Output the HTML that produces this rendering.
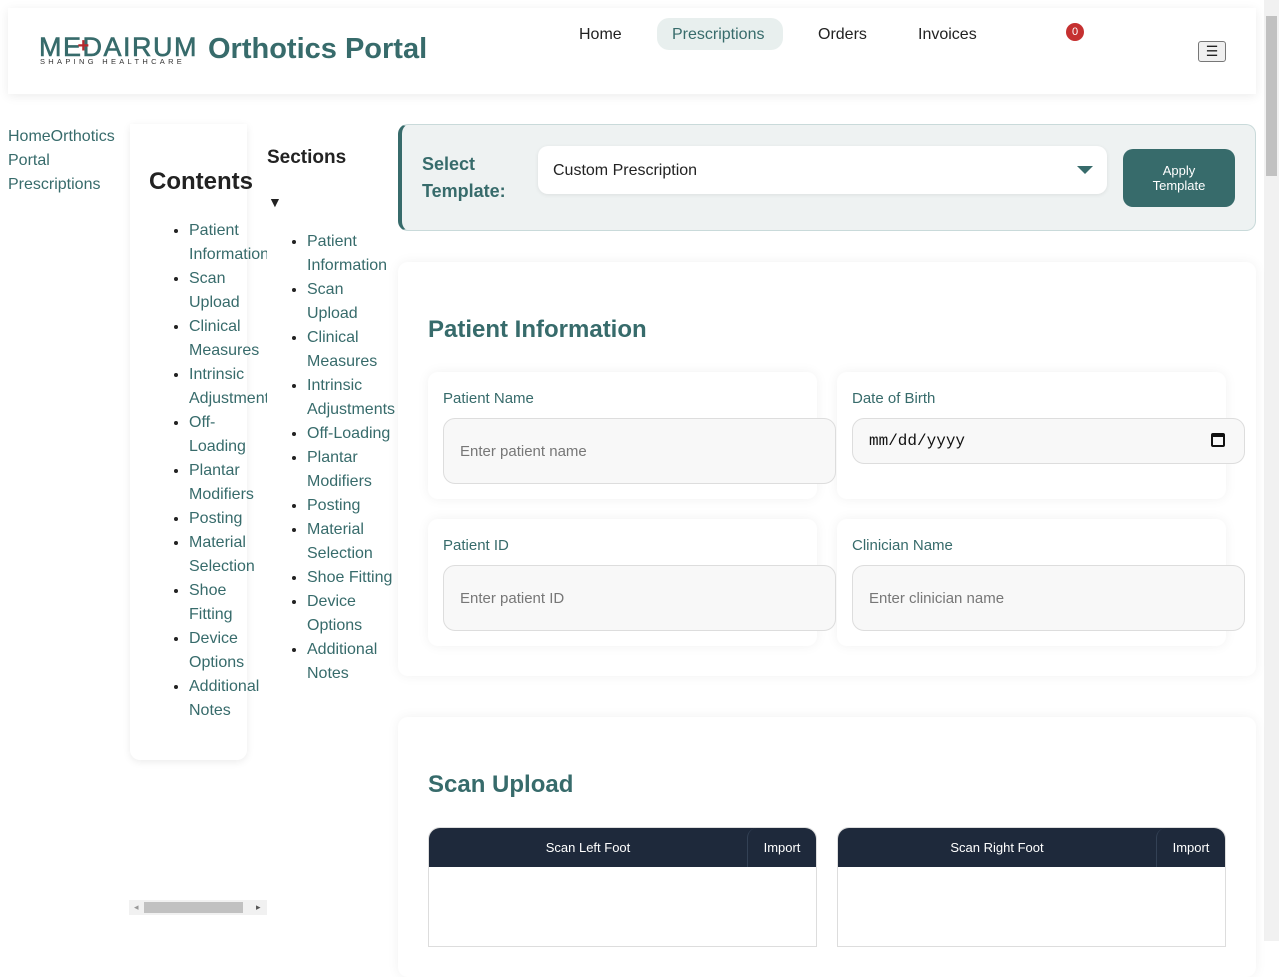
<!DOCTYPE html>
<html><head><meta charset="utf-8"><style>
*{box-sizing:border-box;margin:0;padding:0}
body{width:1279px;height:941px;overflow:hidden;background:#fff;font-family:"Liberation Sans",sans-serif;position:relative;color:#222}
.a{position:absolute}
.teal{color:#376b6b}
header{position:absolute;left:8px;top:8px;width:1248px;height:86px;background:#fff;box-shadow:0 2px 10px rgba(0,0,0,.08)}
.nav{position:absolute;top:18px;font-size:16px;color:#222}
ul{list-style:disc;position:absolute}
li{font-size:16px;line-height:24px;color:#376b6b}
li::marker{color:#222}
.card{position:absolute;background:#fff;border-radius:10px;box-shadow:0 0 12px rgba(0,0,0,.06)}
.lbl{position:absolute;font-size:15px;color:#376b6b}
.inp{position:absolute;background:#f8f8f8;border:1px solid #ddd;border-radius:12px;font-size:15px;color:#777;padding-left:16px;display:flex;align-items:center}
.scan{position:absolute;top:827px;width:389px;height:120px;border:1px solid #ddd;border-radius:12px 12px 0 0;overflow:hidden}
.scan .h{height:39px;background:#1e293b;color:#fff;font-size:13px;display:flex;align-items:center;justify-content:center;position:relative;padding-right:69px}
.scan .imp{position:absolute;right:0;top:0;height:39px;width:69px;border-left:1px solid #334155;border-radius:10px 0 0 0;display:flex;align-items:center;justify-content:center}
</style></head><body>
<header>
 <div class="a" style="left:31px;top:26px;font-size:27px;letter-spacing:1.5px;color:#376b6b;line-height:26px;white-space:nowrap;-webkit-text-stroke:0.6px #376b6b">ME<span style="color:#b5282c;font-weight:bold;font-size:20px;display:inline-block;width:0;position:relative;left:-5px;top:-4px;-webkit-text-stroke:0">+</span>DAIRUM</div>
 <div class="a" style="left:32px;top:49px;font-size:7.5px;letter-spacing:3.3px;color:#333;white-space:nowrap">SHAPING HEALTHCARE</div>
 <div class="a teal" style="left:200px;top:25px;font-size:29px;font-weight:bold">Orthotics Portal</div>
 <div class="a" style="left:649px;top:10px;width:126px;height:32px;background:#e8efee;border-radius:12px"></div>
 <div class="nav" style="left:571px">Home</div>
 <div class="nav" style="left:664px;color:#376b6b">Prescriptions</div>
 <div class="nav" style="left:810px">Orders</div>
 <div class="nav" style="left:910px">Invoices</div>
 <div class="a" style="left:1058px;top:15px;width:18px;height:18px;border-radius:50%;background:#c53030;color:#fff;font-size:11px;text-align:center;line-height:18px">0</div>
 <div class="a" style="left:1190px;top:33px;width:28px;height:21px;border:1px solid #777;border-radius:3px;background:#f0f0f0;font-size:14px;text-align:center;line-height:19px">☰</div>
</header>
<div class="a" style="left:1264px;top:0;width:15px;height:941px;background:#f1f1f1"></div>
<div class="a" style="left:1266px;top:16px;width:11px;height:160px;background:#c1c1c1"></div>

<div class="a teal" style="left:8px;top:125px;font-size:16px;line-height:24px;width:115px">HomeOrthotics Portal Prescriptions</div>

<div class="a" style="left:130px;top:124px;width:117px;height:636px;background:#fff;box-shadow:0 2px 8px rgba(0,0,0,.08);border-radius:0 0 10px 10px"></div>
<div class="a" style="left:149px;top:168px;font-size:24px;font-weight:bold">Contents</div>
<div class="a" style="left:130px;top:219px;width:137px;height:520px;overflow:hidden">
<ul style="left:43px;top:0;padding-left:16px;width:120px">
<li>Patient<br>Information</li><li>Scan<br>Upload</li><li>Clinical<br>Measures</li><li>Intrinsic<br>Adjustments</li><li>Off-<br>Loading</li><li>Plantar<br>Modifiers</li><li>Posting</li><li>Material<br>Selection</li><li>Shoe<br>Fitting</li><li>Device<br>Options</li><li>Additional<br>Notes</li>
</ul></div>
<div class="a" style="left:129px;top:900px;width:138px;height:15px;background:#f1f1f1"></div>
<div class="a" style="left:144px;top:902px;width:99px;height:11px;background:#c1c1c1"></div>
<div class="a" style="left:134px;top:902px;font-size:9px;color:#999">◂</div>
<div class="a" style="left:256px;top:902px;font-size:9px;color:#555">▸</div>

<div class="a" style="left:267px;top:147px;font-size:19px;font-weight:bold">Sections</div>
<div class="a" style="left:268px;top:194px;font-size:14px">▼</div>
<ul style="left:307px;top:230px;width:95px">
<li>Patient<br>Information</li><li>Scan<br>Upload</li><li>Clinical<br>Measures</li><li>Intrinsic<br>Adjustments</li><li>Off-Loading</li><li>Plantar<br>Modifiers</li><li>Posting</li><li>Material<br>Selection</li><li>Shoe Fitting</li><li>Device<br>Options</li><li>Additional<br>Notes</li>
</ul>

<div class="a" style="left:398px;top:124px;width:858px;height:107px;background:#eef2f2;border:1px solid #c9dada;border-left:4px solid #376b6b;border-radius:10px"></div>
<div class="a teal" style="left:422px;top:151px;font-size:18px;font-weight:bold;line-height:27px">Select<br>Template:</div>
<div class="a" style="left:538px;top:146px;width:569px;height:48px;background:#fff;border-radius:10px;box-shadow:0 1px 4px rgba(0,0,0,.08);font-size:16px;padding:16px 0 0 15px">Custom Prescription</div>
<div class="a" style="left:1077px;top:166px;width:0;height:0;border-left:8px solid transparent;border-right:8px solid transparent;border-top:8px solid #376b6b"></div>
<div class="a" style="left:1123px;top:149px;width:112px;height:58px;background:#376b6b;border-radius:10px;color:#fff;font-size:13px;text-align:center;padding-top:14px;line-height:15px">Apply<br>Template</div>

<div class="card" style="left:398px;top:262px;width:858px;height:414px"></div>
<div class="a teal" style="left:428px;top:316px;font-size:24px;font-weight:bold">Patient Information</div>
<div class="card" style="left:428px;top:372px;width:389px;height:127px"></div>
<div class="card" style="left:837px;top:372px;width:389px;height:127px"></div>
<div class="card" style="left:428px;top:519px;width:389px;height:127px"></div>
<div class="card" style="left:837px;top:519px;width:389px;height:127px"></div>
<div class="lbl" style="left:443px;top:390px">Patient Name</div>
<div class="inp" style="left:443px;top:418px;width:393px;height:66px">Enter patient name</div>
<div class="lbl" style="left:852px;top:390px">Date of Birth</div>
<div class="inp" style="left:852px;top:418px;width:393px;height:46px;color:#111;font-family:'Liberation Mono',monospace;font-size:16px">mm/dd/yyyy<span style="position:absolute;right:19px;top:14px;width:14px;height:14px;border:2px solid #111;border-top-width:4px;border-radius:2px"></span></div>
<div class="lbl" style="left:443px;top:537px">Patient ID</div>
<div class="inp" style="left:443px;top:565px;width:393px;height:66px">Enter patient ID</div>
<div class="lbl" style="left:852px;top:537px">Clinician Name</div>
<div class="inp" style="left:852px;top:565px;width:393px;height:66px">Enter clinician name</div>

<div class="card" style="left:398px;top:717px;width:858px;height:260px"></div>
<div class="a teal" style="left:428px;top:771px;font-size:24px;font-weight:bold">Scan Upload</div>
<div class="scan" style="left:428px"><div class="h">Scan Left Foot<div class="imp">Import</div></div></div>
<div class="scan" style="left:837px"><div class="h">Scan Right Foot<div class="imp">Import</div></div></div>
</body></html>
